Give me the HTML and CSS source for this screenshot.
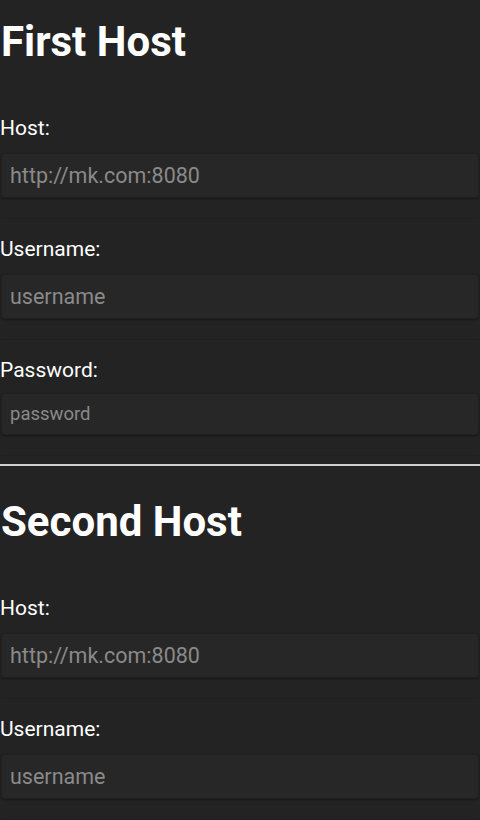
FILE: index.html
```html
<!DOCTYPE html>
<html lang="en">
<head>
    <meta charset="UTF-8">
    <title>Hosts</title>
    <link rel="stylesheet" href="styles.css">
</head>
<body>
    <section class="host">
        <h1 class="host-title">First Host</h1>

        <div class="field">
            <label class="field-label" for="host1">Host:</label>
            <input class="field-input" id="host1" type="text" placeholder="http://mk.com:8080">
        </div>

        <div class="field">
            <label class="field-label" for="user1">Username:</label>
            <input class="field-input" id="user1" type="text" placeholder="username">
        </div>

        <div class="field">
            <label class="field-label" for="pass1">Password:</label>
            <input class="field-input password" id="pass1" type="password" placeholder="password">
        </div>
    </section>

    <hr class="divider">

    <section class="host">
        <h1 class="host-title">Second Host</h1>

        <div class="field">
            <label class="field-label" for="host2">Host:</label>
            <input class="field-input" id="host2" type="text" placeholder="http://mk.com:8080">
        </div>

        <div class="field">
            <label class="field-label" for="user2">Username:</label>
            <input class="field-input" id="user2" type="text" placeholder="username">
        </div>

        <div class="field">
            <label class="field-label" for="pass2">Password:</label>
            <input class="field-input password" id="pass2" type="password" placeholder="password">
        </div>
    </section>
</body>
</html>
```

FILE: styles.css
```css
body {
    background: #232323;
    color: white;
    font-family: Roboto, "Noto Sans", Arial, sans-serif;
    margin: 0;
    padding: 0 1px;
}

.host-title {
    font-size: 42px;
    font-weight: bold;
    line-height: 48px;
    margin: 18px 0 50px 0;
}

.field {
    display: flex;
    flex-direction: column;
    padding-bottom: 20px;
    margin-bottom: 18px;
    border-bottom: 1px solid #1f1f1f;
}

.field:last-child {
    margin-bottom: 8px;
}

.field-label {
    font-size: 21px;
    line-height: 24px;
    margin-left: -1px;
    margin-bottom: 13px;
}

.field-input {
    box-sizing: border-box;
    height: 45px;
    padding: 0 8px;
    background: #272727;
    border: 1px solid #202020;
    border-radius: 4px;
    box-shadow: 0 1px 2px rgba(0,0,0,0.35);
    color: #ddd;
    font-family: Roboto, "Noto Sans", Arial, sans-serif;
    font-size: 21.5px;
    outline: none;
}

.field-input::placeholder {
    color: #8a8a8a;
}

.field-input.password {
    height: 42px;
    margin-top: -2px;
    font-size: 18.5px;
}

.divider {
    border: none;
    border-top: 2px solid #cfcfcf;
    margin: 0 -1px 32px -1px;
}
```
